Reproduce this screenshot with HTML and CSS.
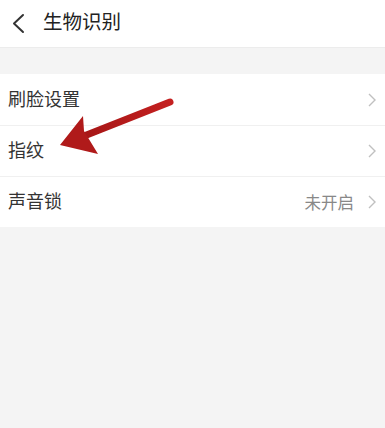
FILE: index.html
```html
<!DOCTYPE html>
<html lang="zh">
<head>
<meta charset="utf-8">
<link rel="stylesheet" href="styles.css">
</head>
<body>
<div class="page">
  <header class="header">
    <svg class="back" width="14" height="22" viewBox="0 0 14 22"><path d="M11 2 L2 10.5 L11 19" fill="none" stroke="#333" stroke-width="2" stroke-linecap="round" stroke-linejoin="round"/></svg>
    <span class="title">生物识别</span>
  </header>
  <div class="gap"></div>
  <div class="list">
    <div class="row"><span class="label">刷脸设置</span><span class="right"><svg class="chev" width="10" height="16" viewBox="0 0 10 16"><path d="M2 2 L8 8 L2 14" fill="none" stroke="#c0c0c0" stroke-width="1.4"/></svg></span></div>
    <div class="row"><span class="label">指纹</span><span class="right"><svg class="chev" width="10" height="16" viewBox="0 0 10 16"><path d="M2 2 L8 8 L2 14" fill="none" stroke="#c0c0c0" stroke-width="1.4"/></svg></span></div>
    <div class="row"><span class="label">声音锁</span><span class="right"><span class="value">未开启</span><svg class="chev" width="10" height="16" viewBox="0 0 10 16"><path d="M2 2 L8 8 L2 14" fill="none" stroke="#c0c0c0" stroke-width="1.4"/></svg></span></div>
  </div>
  <svg class="arrow" width="385" height="428" viewBox="0 0 385 428">
    <defs>
      <linearGradient id="g" x1="0" y1="0" x2="1" y2="0">
        <stop offset="0" stop-color="#a61616"/>
        <stop offset="1" stop-color="#c42020"/>
      </linearGradient>
    </defs>
    <line x1="170" y1="102" x2="84" y2="136" stroke="url(#g)" stroke-width="7" stroke-linecap="round"/>
    <path d="M60 145 L83 116 L84 131 L98 154 Z" fill="#b01a1a"/>
  </svg>
</div>
</body>
</html>
```
FILE: styles.css
```css
html, body {
  margin: 0;
  padding: 0;
}
body {
  background: #f4f4f4;
  font-family: "Noto Sans CJK SC", "Noto Sans", sans-serif;
  width: 385px;
  height: 428px;
  overflow: hidden;
}
.page {
  position: relative;
  width: 385px;
  height: 428px;
}
.header {
  height: 48px;
  background: #fff;
  display: flex;
  align-items: center;
  padding-left: 12px;
  box-sizing: border-box;
  border-bottom: 1px solid #ececec;
}
.back {
  display: block;
}
.title {
  margin-left: 17px;
  font-size: 19.5px;
  color: #222;
  line-height: 1;
  margin-top: -5px;
}
.gap {
  height: 26px;
}
.list {
  background: #fff;
}
.row {
  height: 51px;
  box-sizing: border-box;
  display: flex;
  align-items: center;
  justify-content: space-between;
  padding: 0 8px 0 8px;
}
.row + .row {
  border-top: 1px solid #f0f0f0;
}
.label {
  font-size: 18px;
  color: #333;
  line-height: 1;
  margin-top: -4px;
}
.right {
  display: flex;
  align-items: center;
}
.value {
  font-size: 16.5px;
  color: #888;
  margin-right: 13px;
  line-height: 1;
}
.chev {
  display: block;
}
.arrow {
  position: absolute;
  left: 0;
  top: 0;
  pointer-events: none;
}
```
